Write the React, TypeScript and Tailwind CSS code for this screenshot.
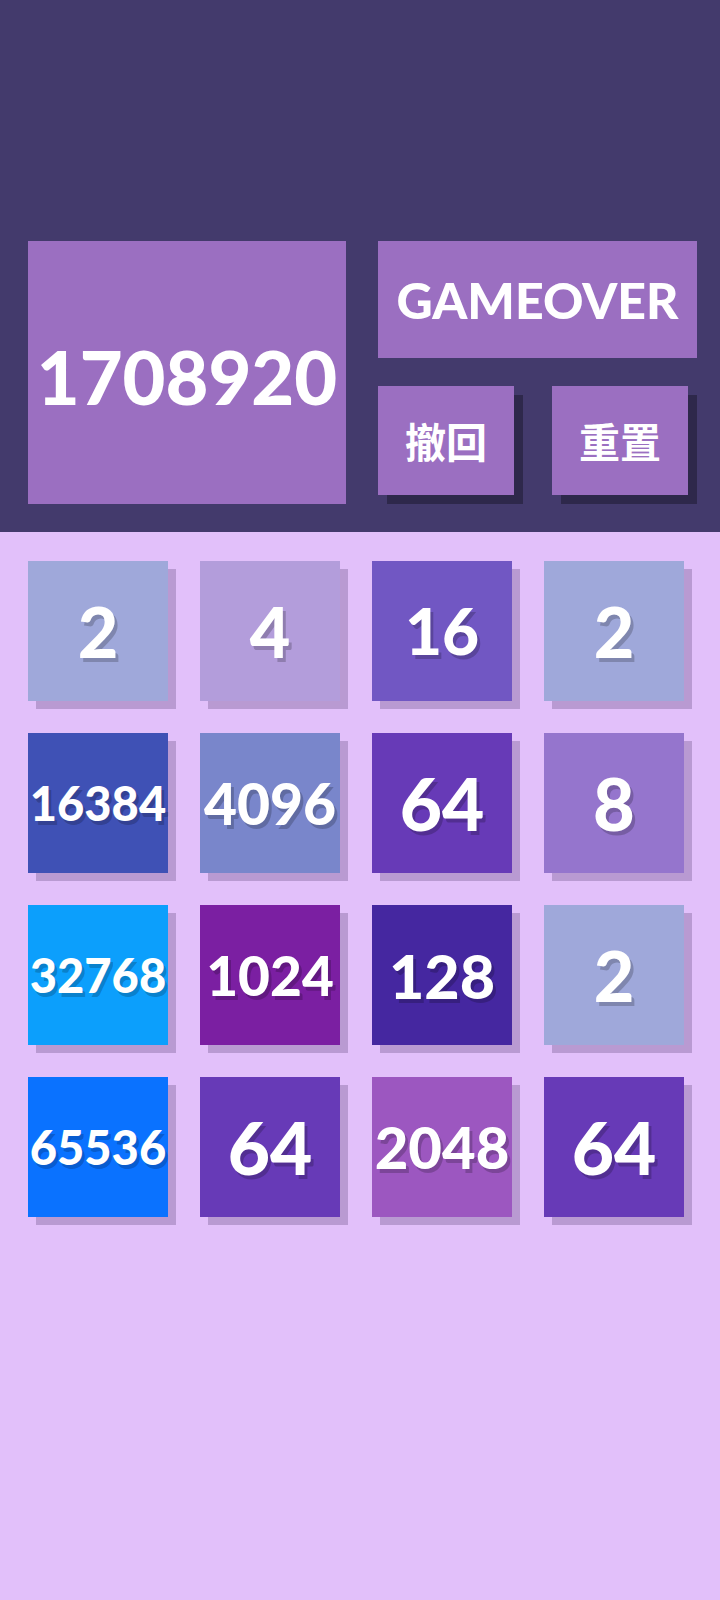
import React from 'react'

type Tile = { value: number; bg: string; size: string }

// board state, row by row
const tiles: Tile[] = [
  { value: 2, bg: 'bg-[#9fa8da]', size: 'text-[70px]' },
  { value: 4, bg: 'bg-[#b39ddb]', size: 'text-[70px]' },
  { value: 16, bg: 'bg-[#7157c3]', size: 'text-[64px]' },
  { value: 2, bg: 'bg-[#9fa8da]', size: 'text-[70px]' },

  { value: 16384, bg: 'bg-[#3f51b5]', size: 'text-[47px]' },
  { value: 4096, bg: 'bg-[#7986cb]', size: 'text-[57px]' },
  { value: 64, bg: 'bg-[#673ab7]', size: 'text-[73px]' },
  { value: 8, bg: 'bg-[#9575cd]', size: 'text-[72px]' },

  { value: 32768, bg: 'bg-[#0c9ffc]', size: 'text-[47px]' },
  { value: 1024, bg: 'bg-[#7b1fa2]', size: 'text-[55px]' },
  { value: 128, bg: 'bg-[#4527a0]', size: 'text-[61px]' },
  { value: 2, bg: 'bg-[#9fa8da]', size: 'text-[70px]' },

  { value: 65536, bg: 'bg-[#0a72ff]', size: 'text-[47px]' },
  { value: 64, bg: 'bg-[#673ab7]', size: 'text-[73px]' },
  { value: 2048, bg: 'bg-[#9c57c0]', size: 'text-[58px]' },
  { value: 64, bg: 'bg-[#673ab7]', size: 'text-[73px]' },
]

function HeaderButton({ label }: { label: string }) {
  return (
    <button className="w-[136px] h-[109px] shrink-0 bg-[#9b6fc1] shadow-[9px_9px_0_rgba(0,0,0,0.3)] flex items-center justify-center text-white text-[41px] font-bold leading-none font-['Noto_Sans_CJK_SC',sans-serif]">
      {label}
    </button>
  )
}

export default function App() {
  return (
    <div className="w-[720px] min-h-[1600px] bg-[#e2c0fa] font-['Lato','Open_Sans',sans-serif]">
      {/* Header */}
      <div className="h-[532px] bg-[#433a6c] pt-[241px] pl-[28px] flex">
        <div className="w-[318px] h-[263px] shrink-0 bg-[#9b6fc1] flex items-center justify-center pt-[8px]">
          <span className="text-white text-[74px] font-black leading-none">1708920</span>
        </div>
        <div className="ml-[32px] w-[319px] shrink-0 flex flex-col">
          <div className="h-[117px] bg-[#9b6fc1] flex items-center justify-center">
            <span className="text-white text-[50px] font-black leading-none">GAMEOVER</span>
          </div>
          <div className="mt-[28px] flex gap-[38px]">
            <HeaderButton label="撤回" />
            <HeaderButton label="重置" />
          </div>
        </div>
      </div>

      {/* Board */}
      <div className="pt-[29px] px-[28px] grid grid-cols-[repeat(4,140px)] gap-[32px]">
        {tiles.map((t, i) => (
          <div
            key={i}
            className={`h-[140px] ${t.bg} shadow-[8px_8px_0_rgba(40,20,70,0.22)] flex items-center justify-center`}
          >
            <span
              className={`text-white font-black leading-none ${t.size} [text-shadow:3px_4px_0_rgba(0,0,0,0.2)]`}
            >
              {t.value}
            </span>
          </div>
        ))}
      </div>
    </div>
  )
}
